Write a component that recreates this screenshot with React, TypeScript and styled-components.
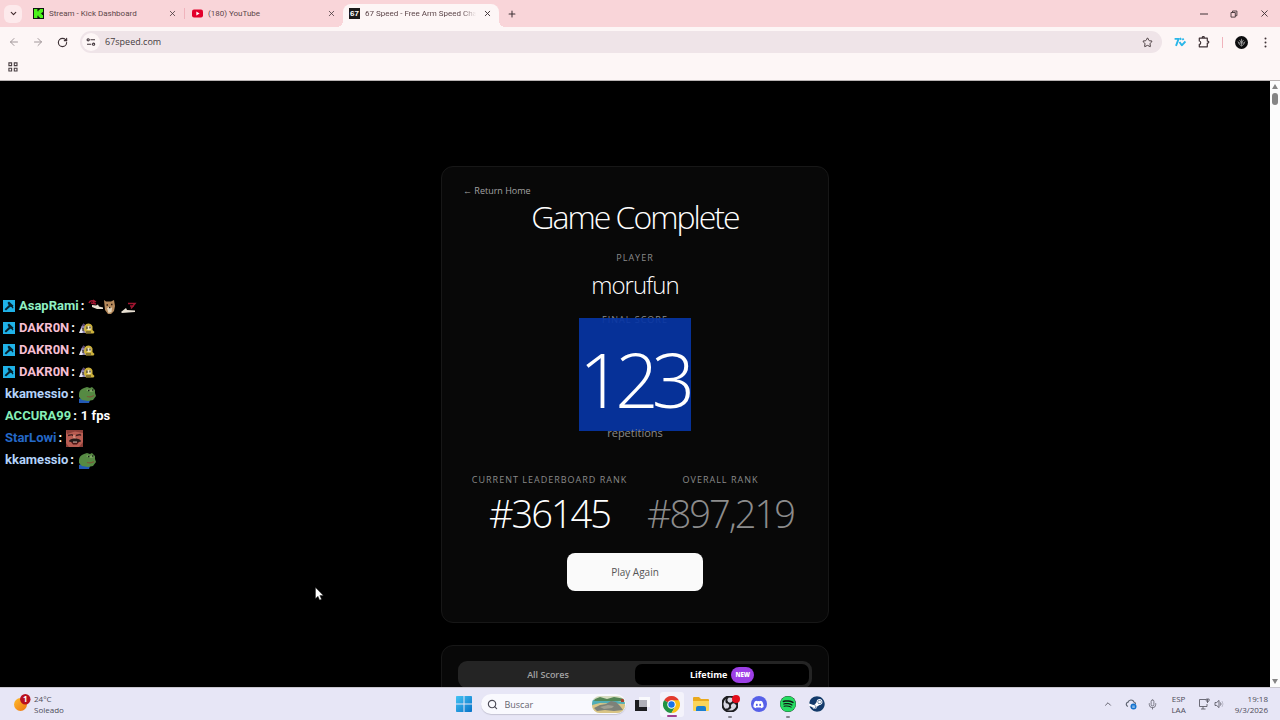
import React from "react";
import styled, { createGlobalStyle, css } from "styled-components";
import { FaDiscord, FaSpotify, FaSteam } from "react-icons/fa";
import { SiObsstudio } from "react-icons/si";
import { ChevronDown, ChevronUp, X, Plus, ArrowLeft, ArrowRight, RotateCw, Star, Mic, Search } from "lucide-react";

const ui = `"Open Sans", "Noto Sans", sans-serif`;

const GlobalStyle = createGlobalStyle`
  * { box-sizing: border-box; }
  body { margin: 0; background: #000; font-family: ${ui}; }
  button, input { font: inherit; color: inherit; border: 0; padding: 0; margin: 0; background: none; outline: none; }
  svg { display: block; flex: none; }
`;

const Screen = styled.div`
  position: relative;
  display: flex;
  flex-direction: column;
  height: 100vh;
  overflow: hidden;
`;

/* ---------- browser window ---------- */

const TabStrip = styled.header`
  display: flex;
  align-items: center;
  height: 27px;
  padding: 0 4px;
  background: #f9d5d9;
  color: #5c4549;
`;

const TabSearch = styled.button`
  display: grid;
  place-items: center;
  width: 18px;
  height: 18px;
  margin-right: 4px;
  border-radius: 6px;
  background: #fdeaec;
  color: #40292d;
`;

const Tab = styled.div<{ $active?: boolean }>`
  position: relative;
  display: flex;
  align-items: center;
  gap: 5px;
  width: ${(p) => (p.$active ? 156 : 158)}px;
  height: 23px;
  margin-top: 4px;
  padding: 0 6px 4px;
  border-radius: 8px 8px 0 0;
  ${(p) =>
    p.$active &&
    css`
      background: #fdf6f6;
      &::before,
      &::after {
        content: "";
        position: absolute;
        bottom: 0;
        width: 6px;
        height: 6px;
      }
      &::before {
        right: 100%;
        background: radial-gradient(circle at 0 0, transparent 6px, #fdf6f6 6px);
      }
      &::after {
        left: 100%;
        background: radial-gradient(circle at 100% 0, transparent 6px, #fdf6f6 6px);
      }
    `}
`;

const TabTitle = styled.span<{ $fade?: boolean }>`
  flex: 1;
  min-width: 0;
  overflow: hidden;
  white-space: nowrap;
  font-family: Roboto, sans-serif;
  font-size: 8px;
  line-height: 12px;
  ${(p) => p.$fade && css`mask-image: linear-gradient(90deg, #000 88%, transparent);`}
`;

const Divider = styled.i`
  width: 1px;
  height: 11px;
  background: #f0b3bc;
`;

const IconButton = styled.button<{ $size?: number; $tone?: string }>`
  display: grid;
  place-items: center;
  flex: none;
  width: ${(p) => p.$size ?? 12}px;
  height: ${(p) => p.$size ?? 12}px;
  color: ${(p) => p.$tone ?? "#3f3236"};
`;

const WindowControls = styled.div`
  display: flex;
  gap: 18px;
  margin-left: auto;
  padding-right: 6px;
`;

const Favicon67 = styled.span`
  display: grid;
  place-items: center;
  width: 11px;
  height: 11px;
  background: #1b1b1b;
  color: #fff;
  font: 700 8px/11px "Liberation Sans", sans-serif;
`;

const Toolbar = styled.nav`
  display: flex;
  align-items: center;
  gap: 12px;
  height: 30px;
  padding: 0 9px 0 8px;
  background: #fdf6f6;
`;

const Omnibox = styled.label`
  display: flex;
  align-items: center;
  gap: 5px;
  flex: 1;
  height: 22px;
  padding: 0 9px 0 2px;
  border-radius: 11px;
  background: #efe4e8;
  color: #463b40;

  input {
    flex: 1;
    font-size: 9px;
    line-height: 14px;
  }
`;

const SiteInfo = styled.span`
  display: grid;
  place-items: center;
  width: 18px;
  height: 18px;
  border-radius: 50%;
  background: #fdf6f6;
`;

const Bookmarks = styled.div`
  display: flex;
  align-items: center;
  height: 24px;
  padding: 0 7px 4px;
  background: #fdf6f6;
  border-bottom: 1px solid #b9b3b3;
`;

const Viewport = styled.div`
  display: flex;
  flex: 1;
  min-height: 0;
  background: #000;
`;

const ScrollTrack = styled.div`
  display: flex;
  flex-direction: column;
  align-items: center;
  width: 10px;
  padding: 3px 0;
  background: #fcfcfc;
  color: #858585;
`;

const ScrollThumb = styled.div`
  width: 6px;
  height: 12px;
  margin: 4px 0 auto;
  border-radius: 3px;
  background: #858585;
`;

/* ---------- result page ---------- */

const Page = styled.main`
  display: flex;
  flex-direction: column;
  align-items: center;
  gap: 22px;
  flex: 1;
  min-width: 0;
  padding: 85px 16px 0;
  overflow: hidden;
`;

const Card = styled.section`
  display: flex;
  flex-direction: column;
  align-items: center;
  flex: none;
  width: 100%;
  max-width: 388px;
  padding: 15px 16px 31px;
  border: 1px solid #171717;
  border-radius: 12px;
  background: #080808;
`;

const ReturnLink = styled.a`
  align-self: flex-start;
  margin: 2px 0 0 5px;
  color: #a3a3a3;
  font-size: 9px;
  line-height: 14px;
  text-decoration: none;
`;

const Title = styled.h1`
  margin: 0 0 15px;
  color: #fff;
  font-size: 32px;
  font-weight: 300;
  line-height: 38px;
  letter-spacing: -2px;
`;

const Label = styled.span`
  color: #8a8a8a;
  font-size: 9px;
  line-height: 14px;
  letter-spacing: 1px;
  text-transform: uppercase;
  white-space: nowrap;
`;

const PlayerName = styled.strong`
  margin: 3px 0 11px;
  color: #fff;
  font-size: 24px;
  font-weight: 300;
  line-height: 34px;
  letter-spacing: -1px;
`;

const Score = styled.div`
  margin: 10px 0 4px;
  font-size: 76px;
  font-weight: 300;
  line-height: 84px;
  letter-spacing: -7px;

  mark {
    padding: 9px 3px 1px 0;
    background: rgba(6, 53, 165, 0.92);
    color: #fff;
  }
`;

const Unit = styled.span`
  color: #8a8a8a;
  font-size: 11px;
  line-height: 16px;
`;

const Ranks = styled.div`
  display: grid;
  grid-template-columns: 149px 149px;
  gap: 22px;
  margin: 32px 0 14px;
`;

const Rank = styled.div<{ $muted?: boolean }>`
  display: flex;
  flex-direction: column;
  align-items: center;

  strong {
    color: ${(p) => (p.$muted ? "#8c8c8c" : "#fff")};
    font-size: 38px;
    font-weight: 300;
    line-height: 52px;
    letter-spacing: -2px;
  }
`;

const PlayAgain = styled.button`
  width: 136px;
  height: 38px;
  border-radius: 8px;
  background: #fafafa;
  color: #555;
  font-size: 10px;
`;

const Switcher = styled.div`
  display: grid;
  grid-template-columns: 1fr 1fr;
  width: 100%;
  height: 27px;
  padding: 3px;
  border-radius: 9px;
  background: #242424;
`;

const SwitchTab = styled.button<{ $active?: boolean }>`
  display: flex;
  align-items: center;
  justify-content: center;
  gap: 4px;
  border-radius: 7px;
  background: ${(p) => (p.$active ? "#000" : "transparent")};
  color: ${(p) => (p.$active ? "#fff" : "#a3a3a3")};
  font-size: 9px;
  font-weight: ${(p) => (p.$active ? 700 : 600)};
`;

const NewBadge = styled.span`
  padding: 0 4px;
  border-radius: 8px;
  background: #9d3fe6;
  color: #fff;
  font-size: 6px;
  font-weight: 800;
  line-height: 16px;
`;

/* ---------- chat overlay ---------- */

const Chat = styled.ul`
  position: absolute;
  left: 2px;
  top: 295px;
  margin: 0;
  padding: 0;
  list-style: none;
  color: #fff;
  font: 700 13px/22px Roboto, sans-serif;
`;

const ChatLine = styled.li`
  display: flex;
  align-items: center;
  gap: 2px;
  height: 22px;
  padding-left: 3px;
`;

const ModBadge = styled.span`
  display: grid;
  place-items: center;
  width: 12px;
  height: 12px;
  margin: 0 2px 0 -2px;
  background: #1fb2e8;
`;

const Author = styled.span<{ $color: string }>`
  color: ${(p) => p.$color};
`;

const Message = styled.span`
  display: flex;
  align-items: center;
  padding-left: 2px;
`;

const Pointer = styled.svg`
  position: absolute;
  left: 315px;
  top: 587px;
`;

/* ---------- taskbar ---------- */

const Taskbar = styled.footer`
  display: grid;
  grid-template-columns: 1fr auto 1fr;
  align-items: center;
  height: 33px;
  padding: 0 12px;
  border-top: 1px solid #c9c7cf;
  background: #e7e6f6;
  color: #4d4c58;
  font-size: 8px;
  line-height: 11px;
`;

const Weather = styled.div`
  display: flex;
  align-items: center;
  gap: 3px;
`;

const Stack = styled.div<{ $align?: string }>`
  display: flex;
  flex-direction: column;
  text-align: ${(p) => p.$align ?? "left"};
`;

const Apps = styled.div`
  display: flex;
  align-items: center;
  gap: 5px;
`;

const SearchBox = styled.label`
  display: flex;
  align-items: center;
  gap: 7px;
  width: 145px;
  height: 20px;
  padding: 0 1px 0 6px;
  border-radius: 10px;
  background: #f9f9fe;
  box-shadow: 0 1px 1px #c5c4d4;

  input {
    flex: 1;
    min-width: 0;
    font-size: 9px;
  }
  input::placeholder {
    color: #66656f;
    opacity: 1;
  }
`;

const AppButton = styled.button<{ $active?: boolean; $running?: boolean }>`
  position: relative;
  display: grid;
  place-items: center;
  width: 24px;
  height: 25px;
  border-radius: 3px;
  background: ${(p) => (p.$active ? "#f4f3fb" : "transparent")};
  &::after {
    content: "";
    position: absolute;
    bottom: ${(p) => (p.$active ? 0 : -1)}px;
    width: ${(p) => (p.$active ? 10 : p.$running ? 4 : 0)}px;
    height: 2px;
    border-radius: 1px;
    background: ${(p) => (p.$active ? "#a0408f" : "#84838e")};
  }
`;

const Tray = styled.div`
  display: flex;
  align-items: center;
  justify-content: flex-end;
`;

const TrayItem = styled.span<{ $gap: number }>`
  margin-right: ${(p) => p.$gap}px;
`;

const Disc = styled.span<{ $bg: string; $fg: string }>`
  display: grid;
  place-items: center;
  width: 16px;
  height: 16px;
  border-radius: 50%;
  background: ${(p) => p.$bg};
  color: ${(p) => p.$fg};
`;

const RecordDot = styled.i`
  position: absolute;
  top: 3px;
  right: 2px;
  width: 8px;
  height: 8px;
  border-radius: 50%;
  background: #e30d1c;
`;

/* ---------- drawings ---------- */

const KickLogo = () => (
  <svg width="11" height="11" viewBox="0 0 11 11">
    <path fill="#101410" d="M0 0h11v11H0z" />
    <path fill="#4df31a" d="M1 1h3.400v2.200h1.200V2.100h1.100V1H10v3.200H8.900v1.100h-1v.6h1v1.100H10V10H6.700V9H5.600V7.800H4.400V10H1z" />
  </svg>
);

const YouTubeLogo = () => (
  <svg width="11" height="11" viewBox="0 0 11 11">
    <rect y="1.500" width="11" height="8" rx="2" fill="#e3002b" />
    <path fill="#fff" d="M4.300 3.600v3.800l3.300-1.900z" />
  </svg>
);

const Sliders = () => (
  <svg width="10" height="10" viewBox="0 0 10 10" fill="none" stroke="#40343a" strokeWidth="1.100">
    <circle cx="2.200" cy="2.800" r="1.100" />
    <path d="M4.500 2.800H9M1 7.200h4.300" />
    <circle cx="7.600" cy="7.200" r="1.100" />
  </svg>
);

const Grid = () => (
  <svg width="10" height="10" viewBox="0 0 10 10" fill="none" stroke="#4a4044" strokeWidth="1.100">
    <path d="M.9.9h2.700v2.700H.9zM6.300.9H9v2.700H6.300zM.9 6.300h2.700V9H.9zM6.300 6.300H9V9H6.300z" />
  </svg>
);

const SevenTv = () => (
  <svg width="12" height="10" viewBox="0 0 12 10" fill="none" stroke="#29b6e8" strokeWidth="1.900" strokeLinejoin="round">
    <path d="M.6 1.900h4L2 8.900M6 1.100l1 1.600M5.500 5l2.300 3.300 3.600-3.800M8.500 1.500l1 1.500" />
  </svg>
);

const Puzzle = () => (
  <svg width="12" height="12" viewBox="0 0 12 12" fill="none" stroke="#3f3236" strokeWidth="1.200" strokeLinejoin="round">
    <path d="M1.300 2.200h8v2.900h.5a1 1 0 0 1 0 2h-.5v3.700h-8V8.400c1.900-.1 1.900-3.300 0-3.400zM4.300 2V1.500a1 1 0 0 1 2 0V2" />
  </svg>
);

const Avatar = () => (
  <svg width="13" height="13" viewBox="0 0 13 13">
    <circle cx="6.500" cy="6.500" r="6.500" fill="#0d0d0f" />
    <path d="M6.500 2.800v7M3 5.500l1.300 2.800 2.200 1.700 2.200-1.700L10 5.500M4.500 4l2 3 2-3M4 7h5" fill="none" stroke="#aaa" strokeWidth=".8" />
  </svg>
);

const Dots = () => (
  <svg width="3" height="11" viewBox="0 0 3 11" fill="#3f3236">
    <circle cx="1.500" cy="1.500" r="1" />
    <circle cx="1.500" cy="5.500" r="1" />
    <circle cx="1.500" cy="9.500" r="1" />
  </svg>
);

const Restore = () => (
  <svg width="8" height="8" viewBox="0 0 8 8" fill="none" stroke="currentColor" strokeWidth=".9">
    <path d="M1 2.500h4.300v4.600H1zM2.500 2.400V1h4.400v4.700H5.500" />
  </svg>
);

const Arrow = ({ down }: { down?: boolean }) => (
  <svg width="6" height="5" viewBox="0 0 6 5" fill="currentColor">
    <path d={down ? "M0 0h6L3 5z" : "M0 5h6L3 0z"} />
  </svg>
);

const Gavel = () => (
  <svg width="12" height="12" viewBox="0 0 12 12">
    <path d="M4.500 2.800 6 1.500l4.500 4.300L9 7.300 7.300 6.700 3 10.600 1.600 9.300 5.700 5.200z" fill="#06222e" />
    <path d="M8.500 5.500l1.500 2.600" fill="none" stroke="#06222e" strokeWidth="1.200" />
  </svg>
);

const HandsCat = () => (
  <svg width="49" height="17" viewBox="0 0 49 17">
    <path d="M1 5c1-3 5-3 5 0M3 5l5 1M5 2l3 2" stroke="#a11530" strokeWidth="1.500" fill="none" />
    <path d="M4 7l4 .5 2-1 1 2 4 1v1.500H9L4 9z" fill="#e8e0d2" />
    <path d="M16 2l2 1.500h5L26 2l1 6-1 5-3 3h-3l-3-4z" fill="#b68a5c" />
    <path d="M19 10l3-1.500 2 1.500-.5 4-3 1z" fill="#e5d4b8" />
    <path d="M18.500 7H20M23 6.500h1.500M21 9.500h1.500" stroke="#2a1b12" strokeWidth="1.300" />
    <path d="M33 14l5-4 1 2 8 .5V14l-13 1z" fill="#e8e0d2" />
    <path d="M40 5.500h7l-4 5M42 8h4" stroke="#a11530" strokeWidth="1.500" fill="none" />
  </svg>
);

const Duo = () => (
  <svg width="16" height="12" viewBox="0 0 16 12">
    <path d="M2 5l2.500-3.500L7 4v7H2z" fill="#8c84b0" />
    <path d="M0 11l2-5 2 1.500L3.500 11z" fill="#e5e3ed" />
    <path d="M3 3.500l1.800-2L6.500 3.500l-1 1z" fill="#584270" />
    <path d="M5.500 4c2-4 7-3 8 .5V8l2 2-1 1.500H7L5 8z" fill="#cdb23c" />
    <circle cx="10" cy="6" r="2.300" fill="#f1e7bd" />
    <path d="M8 4.500v2.500M11 4.500v2M4 6v3M7 10h5" stroke="#3d3428" strokeWidth="1.200" />
  </svg>
);

const Frog = () => (
  <svg width="18" height="17" viewBox="0 0 18 17">
    <path d="M1 13l4-2 7 3-1 3H1z" fill="#2259b5" />
    <path d="M1 8c0-3 2-5 5-6l3-1 3 1 2-1 3 3v3l1 3-3 4-5 1-6-1-3-3z" fill="#568a43" />
    <path d="M8 4c2-1 3-1 4 0l3-1 1 2-3 1-3-1z" fill="#80a865" />
    <path d="M10 4.500h1.500M14 4h1.500" stroke="#172519" strokeWidth="1.300" />
    <path d="M9 10.500c3 .8 5 .5 7-1" stroke="#7a5638" strokeWidth="1.100" fill="none" />
  </svg>
);

const LaughingFace = () => (
  <svg width="17" height="17" viewBox="0 0 17 17">
    <path fill="#b95d52" d="M0 0h17v17H0z" />
    <path d="M0 0h17v3L9 1.500 1 4zM0 13l3 4H0zM17 12v5h-4z" fill="#8d3f38" />
    <path d="M2 5.500l4-.8 1 1M10 5.500l4-1 1 1" stroke="#40201f" strokeWidth="1.300" fill="none" />
    <path d="M8 5v3l2 .5" stroke="#dd9482" strokeWidth="1.500" fill="none" />
    <path d="M3 11.500c0-4 12-4 12 0l-2 .5H5z" fill="#251817" />
    <path d="M5 12h8l-2 2.500H7z" fill="#4d1514" />
    <path d="M7 11.600h4v.9H7z" fill="#ead7c8" />
  </svg>
);

const Sun = () => (
  <svg width="19" height="20" viewBox="0 0 19 20">
    <defs>
      <linearGradient id="sun" x1="0" y1="0" x2="1" y2="1">
        <stop offset="0" stopColor="#ffbd2d" />
        <stop offset="1" stopColor="#ed7411" />
      </linearGradient>
    </defs>
    <circle cx="8.500" cy="10.500" r="6.500" fill="url(#sun)" />
    <circle cx="13.300" cy="5.200" r="5.200" fill="#b90f20" />
    <text x="13.300" y="8" textAnchor="middle" fill="#fff" fontFamily="Open Sans, sans-serif" fontSize="8" fontWeight="700">1</text>
  </svg>
);

const WindowsLogo = () => (
  <svg width="16" height="16" viewBox="0 0 16 16">
    <defs>
      <linearGradient id="win" x1="0" y1="0" x2="1" y2="1">
        <stop offset="0" stopColor="#45c4f4" />
        <stop offset="1" stopColor="#0672c8" />
      </linearGradient>
    </defs>
    <path fill="url(#win)" d="M0 .8A.8.8 0 0 1 .8 0h6.700v7.500H0zM8.500 0h6.700a.8.8 0 0 1 .8.8v6.700H8.500zM0 8.500h7.500V16H.8a.8.8 0 0 1-.8-.8zM8.500 8.500H16v6.700a.8.8 0 0 1-.8.8H8.500z" />
  </svg>
);

const Seal = () => (
  <svg width="33" height="17" viewBox="0 0 33 17">
    <defs><clipPath id="seal"><rect width="33" height="17" rx="8" /></clipPath></defs>
    <g clipPath="url(#seal)">
      <path fill="#d7dcc0" d="M0 0h33v17H0z" />
      <path fill="#51aeb7" d="M0 4l9-1 24 3v4H0z" />
      <path fill="#548655" d="M3 3l5-2 7 2 7-2 11 2v2H2z" />
      <path fill="#d9c485" d="M0 9l8-2 25 1v9H0z" />
      <path fill="#7d8179" d="M2 12l6-3 6-1 5-3 5 1 4 4 3 4-9 1-9-1-8 1z" />
      <path fill="#a0a093" d="M8 11l8-2 6 1-2 2-8 1z" />
      <path fill="#a74132" d="M29 3h3v3h-3z" />
    </g>
  </svg>
);

const TaskView = () => (
  <svg width="16" height="14" viewBox="0 0 16 14">
    <path fill="#fafafd" d="M4 0h11v10H4z" />
    <path fill="#1c1c1f" d="M0 3h4v7h8v4H0z" />
    <path fill="#b0b0b8" d="M4 3h8v7H4z" />
  </svg>
);

const ChromeLogo = () => (
  <svg width="17" height="17" viewBox="0 0 48 48">
    <path fill="#e33b2e" d="M24 24 3.200 12A24 24 0 0 1 44.800 12z" />
    <path fill="#229342" d="M24 24 3.200 12A24 24 0 0 0 24 48l10.400-18z" />
    <path fill="#fbc116" d="M24 12h20.800A24 24 0 0 1 24 48l10.400-18z" />
    <circle cx="24" cy="24" r="12" fill="#fff" />
    <circle cx="24" cy="24" r="9" fill="#1a73e8" />
  </svg>
);

const Folder = () => (
  <svg width="18" height="16" viewBox="0 0 18 16">
    <path fill="#e9a91e" d="M1 2a1 1 0 0 1 1-1h5l2 2h7a1 1 0 0 1 1 1v4H1z" />
    <path fill="#fbd55a" d="M1 5h16v9a1 1 0 0 1-1 1H2a1 1 0 0 1-1-1z" />
    <path fill="#1c7fd0" d="M4 15v-3a2 2 0 0 1 2-2h6a2 2 0 0 1 2 2v3z" />
  </svg>
);

const CloudSync = () => (
  <svg width="12" height="11" viewBox="0 0 12 11">
    <path d="M3 7.500a2.200 2.200 0 0 1 0-4.300 3.200 3.200 0 0 1 6-.2 2 2 0 0 1 1.500 2" fill="none" stroke="#5f6572" strokeWidth="1.200" />
    <circle cx="8.500" cy="7.500" r="3" fill="#1473cf" />
    <path d="M7.200 7.100h2.600M7.200 8.300h2.600" stroke="#fff" strokeWidth=".6" />
  </svg>
);

const Monitor = () => (
  <svg width="12" height="12" viewBox="0 0 12 12" fill="none" stroke="#5f5e6a" strokeWidth=".9">
    <path d="M8 1.500H1.500v7H9V6M3 11h4.500M5 8.500V11M9.500 5V1M8.300 1h2.800v1.800L9.500 4 8.300 2.800z" />
  </svg>
);

const Speaker = () => (
  <svg width="11" height="10" viewBox="0 0 11 10" fill="none" stroke="#5f5e6a" strokeWidth=".9">
    <path d="M1 3.500h1.700L5 1.400v7.200L2.700 6.500H1zM6.500 3.500q1 1.500 0 3" />
    <path d="M8 2q2 3 0 6" opacity=".35" />
  </svg>
);

const chat = [
  { name: "AsapRami", color: "#8ff0c4", mod: true, body: <HandsCat /> },
  { name: "DAKR0N", color: "#f6bfd3", mod: true, body: <Duo /> },
  { name: "DAKR0N", color: "#f6bfd3", mod: true, body: <Duo /> },
  { name: "DAKR0N", color: "#f6bfd3", mod: true, body: <Duo /> },
  { name: "kkamessio", color: "#b3d3fa", body: <Frog /> },
  { name: "ACCURA99", color: "#86efb8", body: "1 fps" },
  { name: "StarLowi", color: "#2468c8", body: <LaughingFace /> },
  { name: "kkamessio", color: "#b3d3fa", body: <Frog /> },
];

export default function App() {
  return (
    <Screen>
      <GlobalStyle />
      <TabStrip>
        <TabSearch aria-label="Search tabs"><ChevronDown size={9} strokeWidth={3} /></TabSearch>
        <Tab>
          <IconButton as="span"><KickLogo /></IconButton>
          <TabTitle>Stream - Kick Dashboard</TabTitle>
          <IconButton aria-label="Close tab"><X size={9} /></IconButton>
        </Tab>
        <Divider />
        <Tab>
          <IconButton as="span"><YouTubeLogo /></IconButton>
          <TabTitle>(180) YouTube</TabTitle>
          <IconButton aria-label="Close tab"><X size={9} /></IconButton>
        </Tab>
        <Tab $active>
          <Favicon67>67</Favicon67>
          <TabTitle $fade>67 Speed - Free Arm Speed Cha</TabTitle>
          <IconButton aria-label="Close tab"><X size={9} strokeWidth={2.5} /></IconButton>
        </Tab>
        <IconButton $size={26} aria-label="New tab"><Plus size={10} strokeWidth={2.5} /></IconButton>
        <WindowControls>
          <IconButton aria-label="Minimize"><svg width="8" height="2"><path d="M0 1h8" stroke="currentColor" /></svg></IconButton>
          <IconButton aria-label="Restore"><Restore /></IconButton>
          <IconButton aria-label="Close"><X size={11} strokeWidth={2} /></IconButton>
        </WindowControls>
      </TabStrip>

      <Toolbar>
        <IconButton $tone="#a1979a" aria-label="Back"><ArrowLeft size={12} /></IconButton>
        <IconButton $tone="#a1979a" aria-label="Forward"><ArrowRight size={12} /></IconButton>
        <IconButton aria-label="Reload"><RotateCw size={11} strokeWidth={2.5} /></IconButton>
        <Omnibox>
          <SiteInfo><Sliders /></SiteInfo>
          <input aria-label="Address" defaultValue="67speed.com" />
          <IconButton aria-label="Bookmark"><Star size={11} /></IconButton>
        </Omnibox>
        <IconButton aria-label="7TV"><SevenTv /></IconButton>
        <IconButton aria-label="Extensions"><Puzzle /></IconButton>
        <Divider />
        <IconButton aria-label="Profile"><Avatar /></IconButton>
        <IconButton aria-label="Menu"><Dots /></IconButton>
      </Toolbar>
      <Bookmarks>
        <IconButton aria-label="Apps"><Grid /></IconButton>
      </Bookmarks>

      <Viewport>
        <Page>
          <Card>
            <ReturnLink href="#">← Return Home</ReturnLink>
            <Title>Game Complete</Title>
            <Label>Player</Label>
            <PlayerName>morufun</PlayerName>
            <Label>Final Score</Label>
            <Score><mark>123</mark></Score>
            <Unit>repetitions</Unit>
            <Ranks>
              <Rank>
                <Label>Current Leaderboard Rank</Label>
                <strong>#36145</strong>
              </Rank>
              <Rank $muted>
                <Label>Overall Rank</Label>
                <strong>#897,219</strong>
              </Rank>
            </Ranks>
            <PlayAgain>Play Again</PlayAgain>
          </Card>
          <Card>
            <Switcher>
              <SwitchTab>All Scores</SwitchTab>
              <SwitchTab $active>Lifetime <NewBadge>NEW</NewBadge></SwitchTab>
            </Switcher>
          </Card>
        </Page>
        <ScrollTrack>
          <Arrow />
          <ScrollThumb />
          <Arrow down />
        </ScrollTrack>
      </Viewport>

      <Taskbar>
        <Weather>
          <Sun />
          <Stack><span>24°C</span><span>Soleado</span></Stack>
        </Weather>
        <Apps>
          <AppButton aria-label="Start"><WindowsLogo /></AppButton>
          <SearchBox>
            <Search size={11} strokeWidth={2.5} />
            <input aria-label="Buscar" placeholder="Buscar" />
            <Seal />
          </SearchBox>
          <AppButton aria-label="Task view"><TaskView /></AppButton>
          <AppButton $active aria-label="Chrome"><ChromeLogo /></AppButton>
          <AppButton aria-label="Explorer"><Folder /></AppButton>
          <AppButton $running aria-label="OBS Studio">
            <Disc $bg="#d8d7e2" $fg="#1d1d20"><SiObsstudio size={16} strokeWidth={2} stroke="#1d1d20" /></Disc>
            <RecordDot />
          </AppButton>
          <AppButton aria-label="Discord"><Disc $bg="#5660e8" $fg="#fff"><FaDiscord size={11} /></Disc></AppButton>
          <AppButton $running aria-label="Spotify"><Disc $bg="#101713" $fg="#25dc62"><FaSpotify size={16} /></Disc></AppButton>
          <AppButton aria-label="Steam"><Disc $bg="#fff" $fg="#133a6b"><FaSteam size={16} /></Disc></AppButton>
        </Apps>
        <Tray>
          <TrayItem $gap={12}><ChevronUp size={10} /></TrayItem>
          <TrayItem $gap={10}><CloudSync /></TrayItem>
          <TrayItem $gap={13}><Mic size={11} strokeWidth={1.5} /></TrayItem>
          <TrayItem $gap={12}><Stack $align="center"><span>ESP</span><span>LAA</span></Stack></TrayItem>
          <TrayItem $gap={4}><Monitor /></TrayItem>
          <TrayItem $gap={10}><Speaker /></TrayItem>
          <Stack $align="right"><span>19:18</span><span>9/3/2026</span></Stack>
        </Tray>
      </Taskbar>

      <Chat>
        {chat.map((line, i) => (
          <ChatLine key={i}>
            {line.mod && <ModBadge><Gavel /></ModBadge>}
            <Author $color={line.color}>{line.name}</Author>
            <span>:</span>
            <Message>{line.body}</Message>
          </ChatLine>
        ))}
      </Chat>
      <Pointer width="9" height="14" viewBox="0 0 9 14">
        <path d="M.5.5v11l2.500-2.300 1.600 3.900 1.900-.8-1.700-3.800h3.500z" fill="#fff" stroke="#222" strokeWidth=".4" />
      </Pointer>
    </Screen>
  );
}
